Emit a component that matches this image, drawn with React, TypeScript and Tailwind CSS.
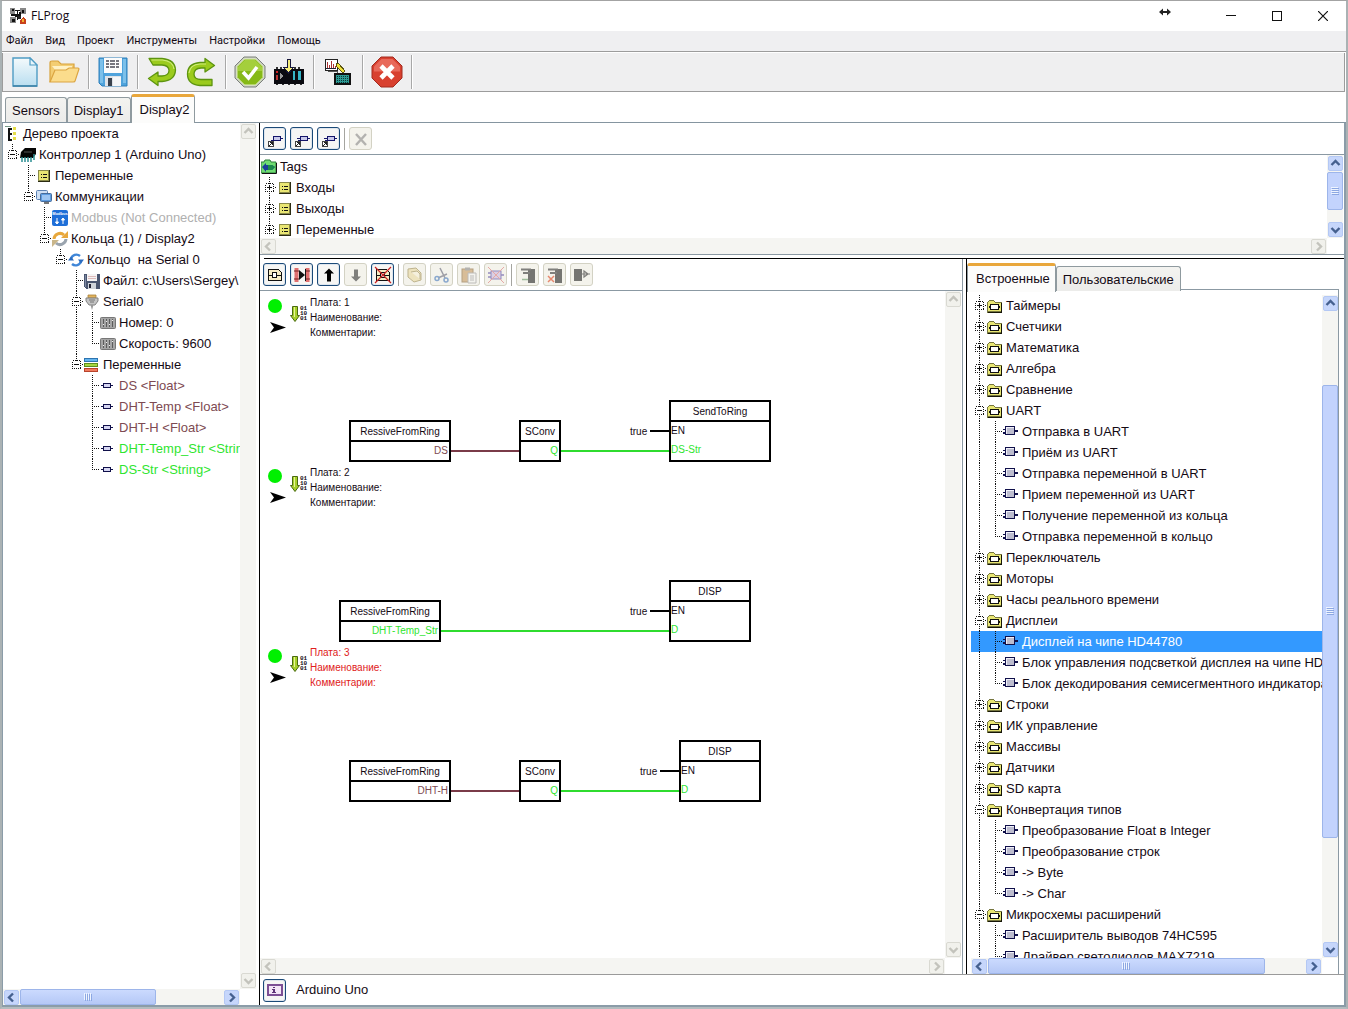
import React from "react";

/* ---------- toolbar icons ---------- */

const NewIcon = () => (
  <svg width="26" height="30" viewBox="0 0 26 30">
    <defs>
      <linearGradient id="pg" x1="0" y1="0" x2="0" y2="1">
        <stop offset="0" stopColor="#f4fafc" />
        <stop offset="1" stopColor="#b9def0" />
      </linearGradient>
    </defs>
    <path d="M1 1h17l7 7v21H1z" fill="url(#pg)" stroke="#4f9cc4" strokeWidth="1.4" />
    <path d="M18 1v7h7z" fill="#e9f5fb" stroke="#4f9cc4" strokeWidth="1.2" />
    <path d="M1 29h24" stroke="#3c7fa3" strokeWidth="1.4" />
  </svg>
);

const OpenIcon = () => (
  <svg width="32" height="24" viewBox="0 0 32 24">
    <path d="M2 22V3q0-2 2-2h6l3 3h13v7" fill="#f3cd73" stroke="#d8a23c" strokeWidth="1.2" />
    <path d="M4 6h20v5H8z" fill="#fff1c4" />
    <path d="M2 22L7 10h11l3-2h9q1 0 1 1l-4 12q0 1-2 1z" fill="#fbdc8c" stroke="#dba440" strokeWidth="1.2" />
  </svg>
);

const SaveIcon = () => (
  <svg width="30" height="30" viewBox="0 0 30 30">
    <path d="M1 1h28v28H4l-3-3z" fill="#4fa3dc" stroke="#2d7fba" />
    <path d="M2 2h3v24H2zM25 2h3v24h-3z" fill="#7cc0ea" />
    <rect x="6" y="1" width="18" height="15" fill="#fbfbfb" />
    <path d="M8 4h14M8 7h14M8 10h14" stroke="#4a4a55" strokeWidth="1.3" strokeDasharray="3 1 5 1" />
    <rect x="7" y="19" width="16" height="10" fill="#dfe3e8" />
    <rect x="10" y="21" width="4" height="8" fill="#39424e" />
    <rect x="15" y="20" width="8" height="9" fill="#f4f6f8" />
  </svg>
);

const UndoIcon = () => (
  <svg width="30" height="30" viewBox="0 0 30 30">
    <path
      d="M2 1.500h13q13 1 13.500 11.500q-.5 10.500-13.500 11.500h-4v4L1.500 21.500l9.500-6.500v4h4q7-.5 7-5.500t-7-5.500H6z"
      fill="#9bcb1d"
      stroke="#5d9410"
      strokeWidth="1.3"
      strokeLinejoin="round"
    />
    <path d="M4.500 3h11q10.500 1 11.500 9" fill="none" stroke="#d0ec7a" strokeWidth="1.2" />
  </svg>
);

const RedoIcon = () => (
  <svg width="30" height="30" viewBox="0 0 30 30">
    <path
      d="M26 28.500H14Q1.500 27.500 1.500 17Q1.500 6.500 14 5.500h5v-4l9.500 7l-9.500 6.500v-4h-4q-7 .5-7 6t7 5.500h11z"
      fill="#9bcb1d"
      stroke="#5d9410"
      strokeWidth="1.3"
      strokeLinejoin="round"
    />
    <path d="M3 16q1-8.500 11-9h6" fill="none" stroke="#d0ec7a" strokeWidth="1.2" />
  </svg>
);

const CheckIcon = () => (
  <svg width="32" height="32" viewBox="0 0 32 32">
    <path d="M10 1h12l9 9v12l-9 9H10l-9-9V10z" fill="#c8cbc4" stroke="#7c8278" />
    <path d="M10.500 3h11L29 10.500v11L21.500 29h-11L3 21.500v-11z" fill="#86b917" stroke="#e4f2bd" />
    <path d="M11 4h10l7 7v4H4v-4z" fill="#a4cf3c" />
    <path d="M9 16l5.500 6L23 11" fill="none" stroke="#fff" strokeWidth="3.600" />
  </svg>
);

const UploadIcon = () => (
  <svg width="30" height="28" viewBox="0 0 30 28" shapeRendering="crispEdges">
    <rect x="0" y="11" width="30" height="15" fill="#0a0a10" />
    <path d="M2 9h2v2H2zM6 9h2v2H6zM20 9h2v2h-2zM24 9h2v2h-2zM2 26h2v1H2zM8 26h2v1H8zM14 26h2v1h-2zM20 26h2v1h-2zM26 26h2v1h-2z" fill="#333" />
    <path d="M13 1h3v8h4l-5.500 6L9 9h4z" fill="#f4ec7a" stroke="#15153a" />
    <rect x="2" y="13" width="2" height="2" fill="#c22" />
    <rect x="2" y="17" width="2" height="5" fill="#b33" />
    <path d="M6 15l3 3-3 3z" fill="#999" />
    <path d="M19 13h2v9h-2zM24 13h3v9h-3z" fill="#35b5c8" />
  </svg>
);

const ChartIcon = () => (
  <svg width="28" height="28" viewBox="0 0 28 28" shapeRendering="crispEdges">
    <rect x="1" y="1" width="12" height="11" fill="#fff" stroke="#222" />
    <path d="M3 10V4M5 10V7M7 10V3M9 10V6M11 10V8" stroke="#a33" />
    <path d="M2 10.500h10" stroke="#223" />
    <path d="M4 13h9v2h3" fill="none" stroke="#555" />
    <path d="M12 5l3 1 6 7-2 2-7-7z" fill="#f0e23c" stroke="#5b5410" />
    <rect x="10" y="15" width="17" height="12" fill="#111" />
    <rect x="12" y="17" width="13" height="8" fill="#2c9a93" />
    <path d="M13 18h12M13 20h12M13 22h12M13 24h12" stroke="#0c3436" strokeDasharray="1 1" />
  </svg>
);

const StopIcon = () => (
  <svg width="32" height="32" viewBox="0 0 32 32">
    <path d="M10 1h12l9 9v12l-9 9H10l-9-9V10z" fill="#d8402f" stroke="#a32a1f" />
    <path d="M10.500 3h11l7.500 7.500v5H3v-5z" fill="#e8695a" />
    <path d="M10 10l12 12M22 10L10 22" stroke="#fff" strokeWidth="4.600" />
  </svg>
);

/* ---------- tree icons ---------- */

type IconName =
  | "project" | "controller" | "vars" | "comm" | "modbus" | "rings" | "ring" | "disk"
  | "serial" | "param" | "stack" | "variable" | "tags" | "folder" | "block";

const TreeIcon = ({ name }: { name: IconName }) => {
  const art: Record<IconName, React.ReactNode> = {
    project: (
      <g shapeRendering="crispEdges">
        <path d="M4.500 2v12M4 2.500h4M4 7.500h4M4 13.500h4" stroke="#111" strokeWidth="2" fill="none" />
        <path d="M9 1h3v3H9zM9 6h3v3H9zM9 11h3v3H9z" fill="#e5de4a" />
        <path d="M1 0h6" stroke="#798" />
      </g>
    ),
    controller: (
      <g>
        <path d="M1 5l4-4h11v6l-3 4H0z" fill="#050505" />
        <path d="M2 10v5M5 10v5M8 10v5M11 10v5M14 7v6" stroke="#2b8f93" strokeWidth="1.500" />
        <path d="M4 5h8" stroke="#555" />
      </g>
    ),
    vars: (
      <g shapeRendering="crispEdges">
        <rect x="2" y="2" width="12" height="12" fill="#2b2b12" />
        <rect x="2" y="2" width="11" height="11" fill="#8a8a4a" />
        <rect x="3" y="3" width="9" height="9" fill="#e9e673" />
        <path d="M5 6h1v1H5zM5 9h1v1H5zM7 6h4v1H7zM7 9h4v1H7z" fill="#111" />
      </g>
    ),
    comm: (
      <g>
        <rect x="0.500" y="1.500" width="11" height="9" rx="1" fill="#cfe0f4" stroke="#5d83b4" />
        <rect x="4.500" y="4.500" width="11" height="8" rx="1" fill="#5c9be0" stroke="#466b99" />
        <rect x="6" y="6" width="8" height="5" fill="#9cc5f2" />
        <path d="M8 14h5" stroke="#777" strokeWidth="2" />
      </g>
    ),
    modbus: (
      <g>
        <rect width="16" height="16" rx="2" fill="#1f6fd8" />
        <text x="8" y="5" fontSize="4" fontWeight="700" textAnchor="middle" fill="#fff" fontFamily="Liberation Sans, sans-serif">Modbus</text>
        <path d="M5 14V8M3.500 12h3L5 14zM11 8v6M9.500 10h3L11 8z" stroke="#fff" fill="#fff" strokeWidth="1" />
      </g>
    ),
    rings: (
      <g fill="none" strokeWidth="3">
        <path d="M2 8a6 6 0 0 1 10-4" stroke="#e8a83c" />
        <path d="M14 8a6 6 0 0 1-10 4" stroke="#9aa4ae" />
        <path d="M9 7h7V0z" fill="#e8a83c" stroke="none" />
        <path d="M7 9H0v7z" fill="#c9b68a" stroke="none" />
      </g>
    ),
    ring: (
      <g fill="none" strokeWidth="2.400">
        <path d="M3 7a5.500 5.500 0 0 1 9-3" stroke="#3f86d8" />
        <path d="M13 9a5.500 5.500 0 0 1-9 3" stroke="#3f86d8" />
        <path d="M10 7.500h6l-3 4z" fill="#2c6cc0" stroke="none" />
        <path d="M0 8.500h6L3 4.500z" fill="#2c6cc0" stroke="none" />
      </g>
    ),
    disk: (
      <g shapeRendering="crispEdges">
        <path d="M0 1h16v15H2l-2-2z" fill="#4a5670" />
        <path d="M1 2h1v12H1z" fill="#7e8aa4" />
        <rect x="3" y="1" width="10" height="7" fill="#f6f4f4" />
        <path d="M4 3.500h8M4 5.500h8" stroke="#dbb" />
        <rect x="4" y="10" width="8" height="6" fill="#cfd4da" />
        <rect x="5" y="11" width="2" height="4" fill="#223" />
      </g>
    ),
    serial: (
      <g>
        <path d="M4 1h8v3H4z" fill="#e2b35c" stroke="#a98038" strokeWidth=".8" />
        <path d="M2 4h12v3l-3 4H5L2 7z" fill="#c4c4c4" stroke="#828282" />
        <path d="M6.500 11h3L8 16z" fill="#999" />
        <path d="M5 6h6M6 8h4" stroke="#777" />
      </g>
    ),
    param: (
      <g>
        <rect x="0.500" y="2.500" width="15" height="11" rx="1" fill="#a5a5a5" stroke="#777" />
        <path d="M3.500 4v8M6.500 4v8M9.500 4v8M12.500 4v8" stroke="#5c5c5c" />
        <path d="M3 9.500h1M6 6.500h1M9 9.500h1M12 5.500h1" stroke="#eee" />
      </g>
    ),
    stack: (
      <g shapeRendering="crispEdges">
        <rect x="0" y="1" width="14" height="4" fill="#2d74b0" />
        <rect x="1" y="2" width="12" height="2" fill="#63b4ee" />
        <rect x="0" y="6" width="14" height="4" fill="#5d8c1e" />
        <rect x="1" y="7" width="12" height="2" fill="#a4d640" />
        <rect x="0" y="11" width="14" height="4" fill="#b8432c" />
        <rect x="1" y="12" width="12" height="2" fill="#f07a5c" />
      </g>
    ),
    variable: (
      <g shapeRendering="crispEdges">
        <path d="M1 7h12v1H1z" fill="#10104a" />
        <rect x="3" y="5" width="8" height="5" fill="#10104a" />
        <rect x="4" y="6" width="6" height="3" fill="#d6d6f2" />
      </g>
    ),
    tags: (
      <g>
        <path d="M0 3h3l1-2h5l1 2h5v11H0z" fill="#6fdc72" stroke="#2c7a3a" />
        <path d="M15.500 4v10.500H1" stroke="#111" fill="none" />
        <path d="M1 8l4-4v2h6l3 2-3 3H5v2z" fill="#1b3f9a" />
        <path d="M7 6h4l3 2-3 3H7z" fill="#1b8a4a" />
      </g>
    ),
    folder: (
      <g shapeRendering="crispEdges">
        <path d="M0 4h1V3h1V2h5v1h1v1h7v11H0z" fill="#77773f" />
        <path d="M1 4h1V3h5v1h1v1h6v8H1z" fill="#e8e673" />
        <path d="M15 5v10H1v-1h13V5z" fill="#161608" />
        <rect x="3" y="6" width="9" height="6" fill="#111" />
        <rect x="4" y="7" width="7" height="4" fill="#fff" />
        <path d="M2 8h1v2H2zM12 8h1v2h-1z" fill="#111" />
      </g>
    ),
    block: (
      <g shapeRendering="crispEdges">
        <path d="M0 5h3v1H0zM0 8h3v2H0zM12 6h3v2h-3z" fill="#10104a" />
        <rect x="2" y="2" width="10" height="9" fill="#10104a" />
        <rect x="3" y="3" width="8" height="7" fill="#bdbdcf" />
        <path d="M3 3h8v1H4v6H3z" fill="#f0f0fa" />
      </g>
    ),
  };
  return (
    <svg width="16" height="16" viewBox="0 0 16 16" className="shrink-0">
      {art[name]}
    </svg>
  );
};

/* ---------- tree ---------- */

type Node = {
  label: string;
  icon: IconName;
  color?: string;
  children?: Node[];
  collapsed?: boolean;
  selected?: boolean;
};

const Guide = ({ kind, sign }: { kind: "pass" | "tee" | "last" | "none"; sign?: "+" | "-" }) => (
  <svg width="16" height="21" viewBox="0 0 16 21" className="shrink-0" shapeRendering="crispEdges">
    <g stroke="#111" strokeDasharray="1 1" fill="none">
      {kind !== "none" && <path d={kind === "last" ? "M8.500 0v10" : "M8.500 0v21"} />}
      {(kind === "tee" || kind === "last") && <path d="M8 10.500h8" />}
    </g>
    {sign && (
      <g>
        <rect x="4.500" y="6.500" width="8" height="8" fill="#fff" stroke="#111" strokeDasharray="1 1" />
        <path d={sign === "+" ? "M6 10.500h5M8.500 8v5" : "M6 10.500h5"} stroke="#111" />
      </g>
    )}
  </svg>
);

const Branch = ({ node, last, trail, root }: { node: Node; last: boolean; trail: boolean[]; root?: boolean }) => {
  const kids = node.collapsed ? [] : node.children ?? [];
  const sign = node.collapsed ? "+" : node.children ? "-" : undefined;
  return (
    <li>
      <div className={`flex h-[21px] items-center whitespace-nowrap ${node.selected ? "bg-[#3399ff] text-white" : ""}`}>
        {trail.map((on, i) => (
          <Guide key={i} kind={on ? "pass" : "none"} />
        ))}
        {!root &&
          (sign ? (
            <button aria-label={`${sign} ${node.label}`} className="shrink-0">
              <Guide kind={last ? "last" : "tee"} sign={sign} />
            </button>
          ) : (
            <Guide kind={last ? "last" : "tee"} />
          ))}
        <TreeIcon name={node.icon} />
        <button className={`ml-[3px] whitespace-pre text-[13px] leading-[21px] ${node.color ?? ""}`}>{node.label}</button>
      </div>
      {kids.length > 0 && (
        <ul>
          {kids.map((k, i) => (
            <Branch key={k.label} node={k} last={i === kids.length - 1} trail={root ? [] : [...trail, !last]} />
          ))}
        </ul>
      )}
    </li>
  );
};

const brown = "text-[#7d4a52]";
const green = "text-[#2fe52f]";

const projectTree: Node = {
  label: "Дерево проекта",
  icon: "project",
  children: [
    {
      label: "Контроллер 1 (Arduino Uno)",
      icon: "controller",
      children: [
        { label: "Переменные", icon: "vars" },
        {
          label: "Коммуникации",
          icon: "comm",
          children: [
            { label: "Modbus (Not Connected)", icon: "modbus", color: "text-[#b0b0b0]" },
            {
              label: "Кольца (1) / Display2",
              icon: "rings",
              children: [
                {
                  label: "Кольцо  на Serial 0",
                  icon: "ring",
                  children: [
                    { label: "Файл: c:\\Users\\Sergey\\", icon: "disk" },
                    {
                      label: "Serial0",
                      icon: "serial",
                      children: [
                        { label: "Номер: 0", icon: "param" },
                        { label: "Скорость: 9600", icon: "param" },
                      ],
                    },
                    {
                      label: "Переменные",
                      icon: "stack",
                      children: [
                        { label: "DS <Float>", icon: "variable", color: brown },
                        { label: "DHT-Temp <Float>", icon: "variable", color: brown },
                        { label: "DHT-H <Float>", icon: "variable", color: brown },
                        { label: "DHT-Temp_Str <String>", icon: "variable", color: green },
                        { label: "DS-Str <String>", icon: "variable", color: green },
                      ],
                    },
                  ],
                },
              ],
            },
          ],
        },
      ],
    },
  ],
};

const tagsTree: Node = {
  label: "Tags",
  icon: "tags",
  children: ["Входы", "Выходы", "Переменные"].map((label) => ({ label, icon: "vars" as const, collapsed: true })),
};

const group = (label: string, ...items: string[]): Node => ({
  label,
  icon: "folder",
  collapsed: items.length === 0,
  children: items.map((item) => ({ label: item, icon: "block" as const, selected: item === "Дисплей на чипе HD44780" })),
});

const library: Node[] = [
  group("Таймеры"),
  group("Счетчики"),
  group("Математика"),
  group("Алгебра"),
  group("Сравнение"),
  group("UART", "Отправка в UART", "Приём из UART", "Отправка переменной в UART", "Прием переменной из UART", "Получение переменной из кольца", "Отправка переменной в кольцо"),
  group("Переключатель"),
  group("Моторы"),
  group("Часы реального времени"),
  group("Дисплеи", "Дисплей на чипе HD44780", "Блок управления подсветкой дисплея на чипе HD44780", "Блок декодирования семисегментного индикатора"),
  group("Строки"),
  group("ИК управление"),
  group("Массивы"),
  group("Датчики"),
  group("SD карта"),
  group("Конвертация типов", "Преобразование Float в Integer", "Преобразование строк", "-> Byte", "-> Char"),
  group("Микросхемы расширений", "Расширитель выводов 74HC595", "Драйвер светодиодов MAX7219", "Расширитель портов"),
];

/* ---------- scroll bars ---------- */

const chevrons = {
  up: "M3.500 9L7.500 5l4 4",
  down: "M3.500 6l4 4 4-4",
  left: "M9 3.500L5 7.500l4 4",
  right: "M6 3.500l4 4-4 4",
};

const Arrow = ({ dir, off }: { dir: keyof typeof chevrons; off?: boolean }) => (
  <button
    aria-label={dir}
    disabled={off}
    className={`size-[15px] shrink-0 rounded-[2px] border ${off ? "border-[#d9d9d2] bg-[#f1f1ec]" : "border-[#b4c8f4] bg-[#c6d6fb]"}`}
  >
    <svg viewBox="1 1 13 13" className="size-[13px]">
      <path d={chevrons[dir]} fill="none" stroke={off ? "#c3c3bc" : "#45608f"} strokeWidth="2.400" />
    </svg>
  </button>
);

const Scroll = ({ axis, thumb }: { axis: "x" | "y"; thumb?: [number, number, number] }) => {
  const y = axis === "y";
  return (
    <div className={`flex shrink-0 justify-between bg-[#f5f5f2] ${y ? "w-4 flex-col items-center py-px" : "h-4 items-center px-px"}`}>
      <Arrow dir={y ? "up" : "left"} off={!thumb} />
      {thumb && (
        <div className={`flex flex-1 ${y ? "w-full flex-col py-px" : "h-full px-px"}`}>
          <div style={{ flexGrow: thumb[0] }} />
          <div
            style={{ flexGrow: thumb[1] }}
            className={`flex items-center justify-center rounded-[2px] border border-[#9db5ea] bg-[#c3d3fd] ${y ? "" : "bg-linear-to-b from-[#cbdafe] to-[#b5c8f6]"}`}
          >
            <svg width="8" height="8" viewBox="0 0 8 8" shapeRendering="crispEdges">
              <path d={y ? "M0 .5h7M0 2.500h7M0 4.500h7M0 6.500h7" : "M.5 0v7M2.500 0v7M4.500 0v7M6.500 0v7"} stroke="#eef4ff" />
              <path d={y ? "M1 1.500h7M1 3.500h7M1 5.500h7M1 7.500h7" : "M1.500 1v7M3.500 1v7M5.500 1v7M7.500 1v7"} stroke="#8ca7e2" />
            </svg>
          </div>
          <div style={{ flexGrow: thumb[2] }} />
        </div>
      )}
      <Arrow dir={y ? "down" : "right"} off={!thumb} />
    </div>
  );
};

/* ---------- small tool buttons ---------- */

const Tool = ({ label, off, children }: { label: string; off?: boolean; children: React.ReactNode }) => (
  <button
    aria-label={label}
    disabled={off}
    className={`flex size-[23px] shrink-0 items-center justify-center rounded-[3px] border ${off ? "border-[#d3d2c4] bg-[#f4f3ec]" : "border-[#1b4a78] bg-[#f6f6f4] shadow-[inset_0_0_0_1px_#dfe6ee]"}`}
  >
    <svg width="18" height="18" viewBox="0 0 18 18" className={off ? "opacity-60" : ""}>
      {children}
    </svg>
  </button>
);

const Rule = () => <span className="h-[22px] w-px bg-[#a5a5a0]" />;

const TagArt = ({ pin }: { pin?: boolean }) => (
  <g shapeRendering="crispEdges">
    <rect x="2" y="11" width="6" height="6" fill="#444" />
    <rect x="3" y="12" width="4" height="4" fill="#fff" />
    <path d="M3 15h1v1H3zM4 14h1v1H4zM5 13h1v1H5zM4 12h3v1H4zM6 13h1v2H6z" fill="#222" />
    <path d="M5 10h3v1H5zM7 7h1v4H7zM14 8h3v1h-3z" fill="#15156a" />
    {pin && <path d="M4 8h3v1H4z" fill="#15156a" />}
    <rect x="7" y="6" width="8" height="5" fill="#15156a" />
    <rect x="8" y="7" width="6" height="3" fill="#c9c9ea" />
  </g>
);

const BoardArt = () => (
  <g shapeRendering="crispEdges">
    <path d="M2.500 3.500h10l3 3v8h-13z" fill="#f7edc4" stroke="#111" />
    <path d="M3 9.500h3M11 9.500h4" stroke="#111" />
    <rect x="6.500" y="6.500" width="4" height="5" fill="#fff" stroke="#111" />
  </g>
);

const PinsArt = ({ kind }: { kind: "add" | "del" | "one" }) => (
  <g>
    {kind === "one" ? (
      <g>
        <rect x="1" y="3" width="8" height="12" fill="#222" />
        <path d="M9 8h8M11 5l4 3-4 3z" fill="none" stroke="#333" strokeWidth="1.200" />
      </g>
    ) : (
      <g>
        <rect x="9" y="3" width="7" height="14" fill="#222" />
        <path d="M2 3.500h10M4 7h7" stroke="#333" strokeWidth="2" />
        <path d={kind === "add" ? "M3 13.500h6" : "M2 10l6 6M8 10l-6 6"} stroke={kind === "add" ? "#696" : "#e0421c"} strokeWidth="1.500" />
      </g>
    )}
  </g>
);

/* ---------- diagram ---------- */

type Port = { side: "l" | "r"; label: string; color?: string };
type Block = { x: number; y: number; w: number; h: number; title: string; ports: Port[] };
type Wire = { x: number; y: number; w: number; color: string };
type Board = { n: number; h: number; alert?: boolean; blocks: Block[]; wires: Wire[]; labels: { x: number; y: number }[] };

const boards: Board[] = [
  {
    n: 1,
    h: 170,
    blocks: [
      { x: 89, y: 129, w: 102, h: 42, title: "RessiveFromRing", ports: [{ side: "r", label: "DS", color: brown }] },
      { x: 259, y: 129, w: 42, h: 42, title: "SConv", ports: [{ side: "r", label: "Q", color: green }] },
      { x: 409, y: 109, w: 102, h: 62, title: "SendToRing", ports: [{ side: "l", label: "EN" }, { side: "l", label: "DS-Str", color: green }] },
    ],
    wires: [
      { x: 191, y: 159, w: 68, color: "bg-[#7a3b48]" },
      { x: 301, y: 159, w: 108, color: "bg-[#2fdc2f]" },
      { x: 390, y: 139, w: 19, color: "bg-black" },
    ],
    labels: [{ x: 370, y: 133 }],
  },
  {
    n: 2,
    h: 180,
    blocks: [
      { x: 79, y: 139, w: 102, h: 42, title: "RessiveFromRing", ports: [{ side: "r", label: "DHT-Temp_Str", color: green }] },
      { x: 409, y: 119, w: 82, h: 62, title: "DISP", ports: [{ side: "l", label: "EN" }, { side: "l", label: "D", color: green }] },
    ],
    wires: [
      { x: 181, y: 169, w: 228, color: "bg-[#2fdc2f]" },
      { x: 390, y: 149, w: 19, color: "bg-black" },
    ],
    labels: [{ x: 370, y: 143 }],
  },
  {
    n: 3,
    h: 180,
    alert: true,
    blocks: [
      { x: 89, y: 119, w: 102, h: 42, title: "RessiveFromRing", ports: [{ side: "r", label: "DHT-H", color: brown }] },
      { x: 259, y: 119, w: 42, h: 42, title: "SConv", ports: [{ side: "r", label: "Q", color: green }] },
      { x: 419, y: 99, w: 82, h: 62, title: "DISP", ports: [{ side: "l", label: "EN" }, { side: "l", label: "D", color: green }] },
    ],
    wires: [
      { x: 191, y: 149, w: 68, color: "bg-[#7a3b48]" },
      { x: 301, y: 149, w: 118, color: "bg-[#2fdc2f]" },
      { x: 400, y: 129, w: 19, color: "bg-black" },
    ],
    labels: [{ x: 380, y: 123 }],
  },
];

const BoardView = ({ board }: { board: Board }) => (
  <section className="relative" style={{ height: board.h }}>
    <div className="flex pt-1 pl-2 text-[10px] leading-[15px]">
      <div className="flex w-[22px] flex-col gap-[9px] pt-1">
        <span className="size-[14px] rounded-full bg-[#00f000]" />
        <svg width="16" height="11" viewBox="0 0 16 11" className="ml-[2px]">
          <path d="M0 0l16 5.500L0 11l4-5.500z" fill="#000" />
        </svg>
      </div>
      <div className="flex w-5 pt-[11px]">
        <svg width="10" height="16" viewBox="0 0 10 16" className="shrink-0">
          <path d="M2.500 .5h5v9h2L5 15.500.5 9.500h2z" fill="#a6d028" stroke="#4a6b10" />
          <path d="M4.500 1v10" stroke="#e4f49a" />
        </svg>
        <span className="font-['Liberation_Mono',monospace] text-[6px] leading-[5px] font-bold">
          01
          <br />
          10
          <br />
          01
        </span>
      </div>
      <div className={board.alert ? "text-[#e02020]" : ""}>
        <p>Плата: {board.n}</p>
        <p>Наименование:</p>
        <p>Комментарии:</p>
      </div>
    </div>
    {board.blocks.map((b) => (
      <div
        key={b.x}
        className="absolute flex flex-col border-2 border-black bg-white text-[10px] leading-[18px]"
        style={{ left: b.x, top: b.y, width: b.w, height: b.h }}
      >
        <div className="h-5 border-b-2 border-black pt-px text-center">{b.title}</div>
        {b.ports.map((p) => (
          <div key={p.label} className={`h-5 ${p.side === "r" ? "pr-px text-right" : ""} ${p.color ?? ""}`}>
            {p.label}
          </div>
        ))}
      </div>
    ))}
    {board.wires.map((w) => (
      <span key={w.x} className={`absolute h-[2px] ${w.color}`} style={{ left: w.x, top: w.y, width: w.w }} />
    ))}
    {board.labels.map((l) => (
      <span key={l.x} className="absolute text-[10px] leading-[15px]" style={{ left: l.x, top: l.y }}>
        true
      </span>
    ))}
  </section>
);

/* ---------- window ---------- */

const Divider = () => <span className="my-[2px] mr-[3px] ml-[5px] w-[2px] border-l border-[#a8a8a8] bg-white" />;

const mainTools: { label: string; icon: React.ReactNode }[][] = [
  [{ label: "Создать", icon: <NewIcon /> }, { label: "Открыть", icon: <OpenIcon /> }],
  [{ label: "Сохранить", icon: <SaveIcon /> }],
  [{ label: "Отменить", icon: <UndoIcon /> }, { label: "Повторить", icon: <RedoIcon /> }],
  [{ label: "Проверить", icon: <CheckIcon /> }, { label: "Загрузить", icon: <UploadIcon /> }],
  [{ label: "Монитор", icon: <ChartIcon /> }],
  [{ label: "Закрыть проект", icon: <StopIcon /> }],
];

const BackTab = ({ children }: { children: React.ReactNode }) => (
  <button className="mt-[3px] h-[25px] rounded-t-[3px] border border-b-0 border-[#8f9a9f] bg-linear-to-b from-[#f3f3f0] to-[#ececea] px-[6px] pt-px text-[13px]">
    {children}
  </button>
);

const FrontTab = ({ children }: { children: React.ReactNode }) => (
  <button className="-mb-px h-[29px] rounded-t-[3px] border-x border-t-[3px] border-x-[#8f9a9f] border-t-[#e9a73c] bg-[#fcfcfb] pr-[5px] pl-2 text-[13px]">
    {children}
  </button>
);

export default function App() {
  return (
    <div className="flex h-screen flex-col overflow-hidden border-x-2 border-t border-b-2 border-x-[#aab2b4] border-t-[#a3a3a3] border-b-[#b3bcbf] bg-white font-['Liberation_Sans',Arial,sans-serif] text-[13px] text-[#140a14]">
      <header className="flex h-[30px] shrink-0 items-center pl-2">
        <svg width="16" height="16" viewBox="0 0 16 16" shapeRendering="crispEdges">
          <path d="M0 0h5v6H0zM10 0h6v6h-6zM0 9h6v6H0z" fill="#888" />
          <path d="M2 1h2v2H2zM12 2h2v3h-2zM2 11h3v3H2zM5 2h5v1H5zM5 6h6v3H5zM7 3h1v9H7zM1 6h5v2H1zM9 4h2v3H9z" fill="#111" />
          <path d="M8 8h3v3H8z" fill="#222" />
          <path d="M10 13l3-4 3 3v4h-6z" fill="#c8401c" />
          <path d="M12 11h2v3h-2z" fill="#f0b030" />
        </svg>
        <h1 className="ml-[5px] font-['Open_Sans',sans-serif] text-[12px] leading-4">FLProg</h1>
        <svg width="12" height="8" viewBox="0 0 12 8" className="mr-[37px] mb-2 ml-auto">
          <path d="M0 4l4-3.500v2.500h4V.5L12 4 8 7.500V5H4v2.500z" fill="#222" />
        </svg>
        <button aria-label="Свернуть" className="flex h-full w-[46px] items-center justify-center">
          <svg width="10" height="10" viewBox="0 0 10 10"><path d="M0 4.500h10" stroke="#111" /></svg>
        </button>
        <button aria-label="Развернуть" className="flex h-full w-[46px] items-center justify-center">
          <svg width="10" height="10" viewBox="0 0 10 10"><rect x=".5" y=".5" width="9" height="9" fill="none" stroke="#111" /></svg>
        </button>
        <button aria-label="Закрыть" className="flex h-full w-[46px] items-center justify-center">
          <svg width="10" height="10" viewBox="0 0 10 10"><path d="M0 0l10 10M10 0L0 10" stroke="#111" strokeWidth="1.200" /></svg>
        </button>
      </header>

      <nav className="flex h-[21px] shrink-0 items-center gap-3 border-b border-[#9c9c9c] bg-[#efeff1] pl-1 font-[Roboto,sans-serif] text-[11px]">
        {["Файл", "Вид", "Проект", "Инструменты", "Настройки", "Помощь"].map((m) => (
          <button key={m}>{m}</button>
        ))}
      </nav>

      <div className="mt-px mr-px flex h-[39px] shrink-0 border border-t-0 border-[#9c9c9c] bg-[#efeff0] pl-[2px]">
        {mainTools.map((tools) => (
          <React.Fragment key={tools[0].label}>
            {tools.map((t) => (
              <button key={t.label} aria-label={t.label} className="flex w-[39px] items-center justify-center">
                {t.icon}
              </button>
            ))}
            <Divider />
          </React.Fragment>
        ))}
      </div>

      <div className="flex h-[31px] shrink-0 border-b border-[#8595a0] pt-[2px] pl-[3px]">
        <BackTab>Sensors</BackTab>
        <BackTab>Display1</BackTab>
        <FrontTab>Display2</FrontTab>
      </div>

      <div className="flex min-h-0 flex-1 border-r-2 border-b-2 border-l border-r-[#8b9ca8] border-b-[#8b9ca8] border-l-[#8b9ca8]">
        <aside className="flex w-[257px] shrink-0 flex-col border-r border-black">
          <div className="flex min-h-0 flex-1 pr-[3px]">
            <ul className="min-w-0 flex-1 overflow-hidden pl-px">
              <Branch node={projectTree} last trail={[]} root />
            </ul>
            <Scroll axis="y" />
          </div>
          <div className="pr-[19px]">
            <Scroll axis="x" thumb={[0, 135, 72]} />
          </div>
        </aside>

        <main className="flex min-w-0 flex-1 flex-col">
          <div className="flex h-8 shrink-0 items-center gap-1 border-b border-b-[#8b99a3] pl-[3px]">
            <Tool label="Добавить вход"><TagArt /></Tool>
            <Tool label="Добавить выход"><TagArt pin /></Tool>
            <Tool label="Добавить переменную"><TagArt pin /></Tool>
            <Rule />
            <Tool label="Удалить" off>
              <path d="M4 4l10 11M14 4L4 15" stroke="#888" strokeWidth="2.400" />
            </Tool>
          </div>

          <div className="flex h-[100px] shrink-0 flex-col border-b border-[#8b99a3]">
            <div className="flex min-h-0 flex-1 pr-px">
              <ul className="min-w-0 flex-1 overflow-hidden pt-px pl-px">
                <Branch node={tagsTree} last trail={[]} root />
              </ul>
              <Scroll axis="y" thumb={[0, 34, 13]} />
            </div>
            <div className="pr-[17px]">
              <Scroll axis="x" />
            </div>
          </div>

          <div className="mt-[3px] ml-1 h-px shrink-0 bg-black" />

          <div className="flex min-h-0 flex-1 border-b border-[#9a9a9a]">
            <div className="mr-[3px] flex min-w-0 flex-1 flex-col border-r border-[#8b99a3]">
              <div className="flex h-8 shrink-0 items-center gap-1 border-b border-[#8b99a3] pl-[3px]">
                <Tool label="Добавить плату"><BoardArt /></Tool>
                <Tool label="Вставить плату">
                  <path d="M3.500 2v14M14.500 2v14" stroke="#e07070" strokeWidth="4" />
                  <path d="M1 5h5M1 13h5M12 5h5M12 13h5" stroke="#722" />
                  <path d="M6 4l6 5-6 5z" fill="#111" />
                  <path d="M12.500 3v12" stroke="#111" />
                </Tool>
                <Tool label="Вверх"><path d="M9 2.500l5 5h-3v8H7v-8H4z" fill="#000" /></Tool>
                <Tool label="Вниз" off><path d="M9 15.500l-5-5h3v-7h4v7h3z" fill="#333" /></Tool>
                <Tool label="Удалить плату">
                  <BoardArt />
                  <path d="M1 1l16 16M17 1L1 17" stroke="#c22" strokeWidth="1.200" />
                </Tool>
                <Rule />
                <Tool label="Копировать" off>
                  <path d="M2 3l8-1 5 5v7l-7 2-6-5z" fill="#ead9a0" stroke="#9b8a50" />
                  <path d="M5 6l6-1 3 3v5" fill="#f6efd4" stroke="#9b8a50" />
                </Tool>
                <Tool label="Вырезать" off>
                  <path d="M7 2l5 10M14 8L5 12" stroke="#667" strokeWidth="1.500" />
                  <circle cx="4" cy="12.500" r="2" fill="none" stroke="#47b" strokeWidth="1.500" />
                  <circle cx="13" cy="14" r="2" fill="none" stroke="#47b" strokeWidth="1.500" />
                </Tool>
                <Tool label="Вставить" off>
                  <rect x="2" y="3" width="11" height="13" fill="#c69a62" stroke="#8a6a3c" />
                  <rect x="5" y="1.500" width="5" height="3" fill="#888" />
                  <path d="M8 7h8v10H8z" fill="#f3f3f0" stroke="#999" />
                  <path d="M10 10h4M10 12h4M10 14h4" stroke="#999" />
                </Tool>
                <Tool label="Удалить блок" off>
                  <rect x="4" y="5" width="10" height="8" fill="#ccb8e0" stroke="#5548a0" />
                  <path d="M1 7h3M1 11h3M14 9h3" stroke="#5548a0" strokeWidth="1.500" />
                  <path d="M1 1l16 16M17 1L1 17" stroke="#d77" />
                </Tool>
                <Rule />
                <Tool label="Добавить вывод" off><PinsArt kind="add" /></Tool>
                <Tool label="Удалить вывод" off><PinsArt kind="del" /></Tool>
                <Tool label="Настроить вывод" off><PinsArt kind="one" /></Tool>
              </div>
              <div className="flex min-h-0 flex-1 pr-px">
                <div className="min-w-0 flex-1 overflow-hidden">
                  {boards.map((b) => (
                    <BoardView key={b.n} board={b} />
                  ))}
                </div>
                <Scroll axis="y" />
              </div>
              <div className="pr-[17px]">
                <Scroll axis="x" />
              </div>
            </div>

            <div className="flex w-[378px] shrink-0 flex-col border-l border-black pt-1">
              <div className="flex h-[27px] shrink-0">
                <FrontTab>Встроенные</FrontTab>
                <div className="mr-[5px] flex flex-1 border-b border-[#8b99a3]">
                  <BackTab>Пользовательские</BackTab>
                </div>
              </div>
              <div className="mr-[5px] flex min-h-0 flex-1 flex-col border-r border-[#8b99a3] pt-[5px] pl-1">
                <div className="flex min-h-0 flex-1">
                  <ul className="min-w-0 flex-1 overflow-hidden">
                    {library.map((n) => (
                      <Branch key={n.label} node={n} last={false} trail={[]} />
                    ))}
                  </ul>
                  <Scroll axis="y" thumb={[74, 450, 105]} />
                </div>
                <div className="pr-4">
                  <Scroll axis="x" thumb={[0, 277, 42]} />
                </div>
              </div>
            </div>
          </div>

          <footer className="flex h-[30px] shrink-0 items-center pl-[3px]">
            <Tool label="Сведения о контроллере">
              <rect x="2" y="4" width="14" height="10" fill="#f3e6f6" stroke="#7c4f94" strokeWidth="2" />
              <path d="M7 6h2v1H7zM6 8h3v3h1v1H6v-1h1V9H6z" fill="#5e3478" />
            </Tool>
            <span className="ml-[10px]">Arduino Uno</span>
          </footer>
        </main>
      </div>
    </div>
  );
}
